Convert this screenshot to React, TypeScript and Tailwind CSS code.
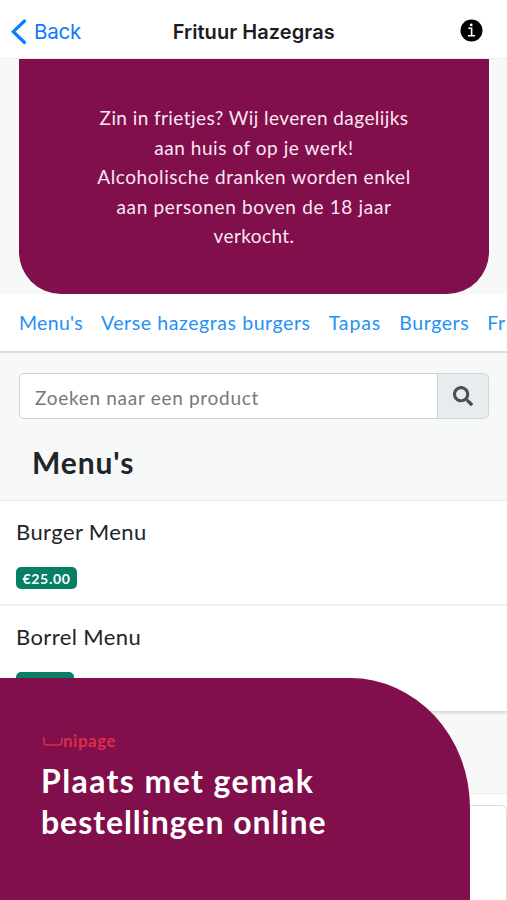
import { FaSearch } from "react-icons/fa";

const introLines = [
  { text: "Zin in frietjes? Wij leveren dagelijks", spacing: "tracking-[0.42px]" },
  { text: "aan huis of op je werk!", spacing: "tracking-[0.55px]" },
  { text: "Alcoholische dranken worden enkel", spacing: "tracking-[0.58px]" },
  { text: "aan personen boven de 18 jaar", spacing: "tracking-[0.66px]" },
  { text: "verkocht.", spacing: "tracking-[0.4px]" },
];

const categories = [
  { name: "Menu's", spacing: "tracking-[0.3px]" },
  { name: "Verse hazegras burgers", spacing: "tracking-[0.58px]" },
  { name: "Tapas", spacing: "tracking-[0.9px]" },
  { name: "Burgers", spacing: "tracking-[0.6px]" },
  { name: "Fr", spacing: "tracking-[0.6px]" },
];

const products = [
  { name: "Burger Menu", price: "€25.00", badge: "w-[61px]" },
  { name: "Borrel Menu", price: "€15.00", badge: "w-[58px]" },
];

const Header = () => {
  return (
    <header className="grid h-[59px] shrink-0 grid-cols-3 items-center border-b border-[#ededee] bg-white px-[11px] pt-[5px] font-[Inter,sans-serif]">
      <button className="flex items-center gap-[7px] text-[20.5px] text-[#0a7cff]">
        <svg width="16" height="26" viewBox="0 0 16 26" fill="none">
          <path d="M13.500 2 2.300 12.700l11.200 10.800" stroke="currentColor" strokeWidth="3.200" strokeLinecap="round" />
        </svg>
        <span className="pt-[2px] tracking-[-0.2px]">Back</span>
      </button>
      <h1 className="pt-px text-center text-[20px] font-semibold tracking-[0.06px] whitespace-nowrap text-[#1c1c1e]">
        Frituur Hazegras
      </h1>
      <svg
        width="23"
        height="23"
        viewBox="0 0 23 23"
        className="mr-[13px] -mt-[2px] justify-self-end"
      >
        <circle cx="11.500" cy="11.500" r="11" fill="#000" />
        <circle cx="11.200" cy="5.900" r="1.400" fill="#fff" />
        <path d="M8.300 9.300h3.300v7.200M7.900 16.700h7.200" stroke="#fff" strokeWidth="1.600" fill="none" />
      </svg>
    </header>
  );
};

const Intro = () => {
  return (
    <section className="shrink-0 pr-[18px] pl-[19px]">
      <div className="h-[235px] rounded-b-[42px] bg-[#800f4b] pt-[44px] text-center text-[19px] leading-[29.5px] text-[#fbe6f2]">
        {introLines.map((line) => (
          <p key={line.text} className={line.spacing}>
            {line.text}
          </p>
        ))}
      </div>
    </section>
  );
};

const CategoryNav = () => {
  return (
    <nav className="flex h-[59px] shrink-0 items-center gap-[18px] overflow-hidden border-b-2 border-[#d9dcdc] bg-white pt-px pl-[19px] text-[19.5px] whitespace-nowrap text-[#2491f5]">
      {categories.map((category) => (
        <a key={category.name} href="#" className={category.spacing}>
          {category.name}
        </a>
      ))}
    </nav>
  );
};

const SearchBar = () => {
  return (
    <div className="mt-5 mr-[18px] ml-[19px] flex h-[46px] shrink-0 overflow-hidden rounded-[5px] border border-[#d0d5d8] bg-white">
      <span className="flex-1 self-center pt-[4px] pl-[15px] text-[19px] tracking-[0.7px] text-[#74797d]">
        Zoeken naar een product
      </span>
      <button className="flex w-[51px] items-center justify-center border-l border-[#d0d5d8] bg-[#e9ecef]">
        <FaSearch className="size-[20px] text-[#495057]" />
      </button>
    </div>
  );
};

const App = () => {
  return (
    <main className="relative flex h-[900px] w-[507px] flex-col overflow-hidden bg-[#f7f9f9] font-[Lato,sans-serif] text-[#212529]">
      <Header />
      <Intro />
      <CategoryNav />
      <SearchBar />
      <h2 className="mt-[23px] ml-8 h-[58px] shrink-0 text-[30px] leading-[40px] font-bold tracking-[0.9px]">Menu's</h2>
      <ul className="shrink-0 border-t border-[#ececed] bg-white shadow-[0_2px_3px_rgba(0,0,0,0.14)]">
        {products.map((product) => (
          <li key={product.name} className="h-[105px] border-b-2 border-[#f0f1f1] px-4 pt-[16px] last:border-0">
            <h3 className="text-[22px] leading-[30px] tracking-[0.4px]">{product.name}</h3>
            <span
              className={`mt-[20px] flex h-[22px] items-center justify-center rounded-[5px] bg-[#067f66] pt-px text-[14px] font-bold tracking-[0.7px] text-white ${product.badge}`}
            >
              {product.price}
            </span>
          </li>
        ))}
      </ul>
      <div className="mt-[82px] flex-1 border-t border-[#ebecec] bg-white pt-[11px]">
        <div className="h-[120px] rounded-[6px] border border-[#d9dbdc] bg-white" />
      </div>

      <div className="absolute bottom-0 left-0 h-[222px] w-[470px] rounded-tr-[120px_130px] bg-[#800f4b] pt-[53px] pl-[41px]">
        <div className="ml-[2px] flex h-[20px] items-center text-[#dc2c46]">
          <svg width="20" height="10" viewBox="0 0 20 10" fill="none" className="mt-px shrink-0">
            <path d="M1 .5v3.700Q1 8 4.500 8h11Q18.800 8 18.800 4.500V1" stroke="currentColor" strokeWidth="1.700" />
          </svg>
          <span className="text-[17px] leading-5 font-bold tracking-[0.5px]">nipage</span>
        </div>
        <p className="mt-[9px] text-[32px] leading-[41px] font-bold text-white">
          <span className="tracking-[1.4px]">Plaats met gemak</span>
          <br />
          <span className="tracking-[0.95px]">bestellingen online</span>
        </p>
      </div>
    </main>
  );
};

export default App;
